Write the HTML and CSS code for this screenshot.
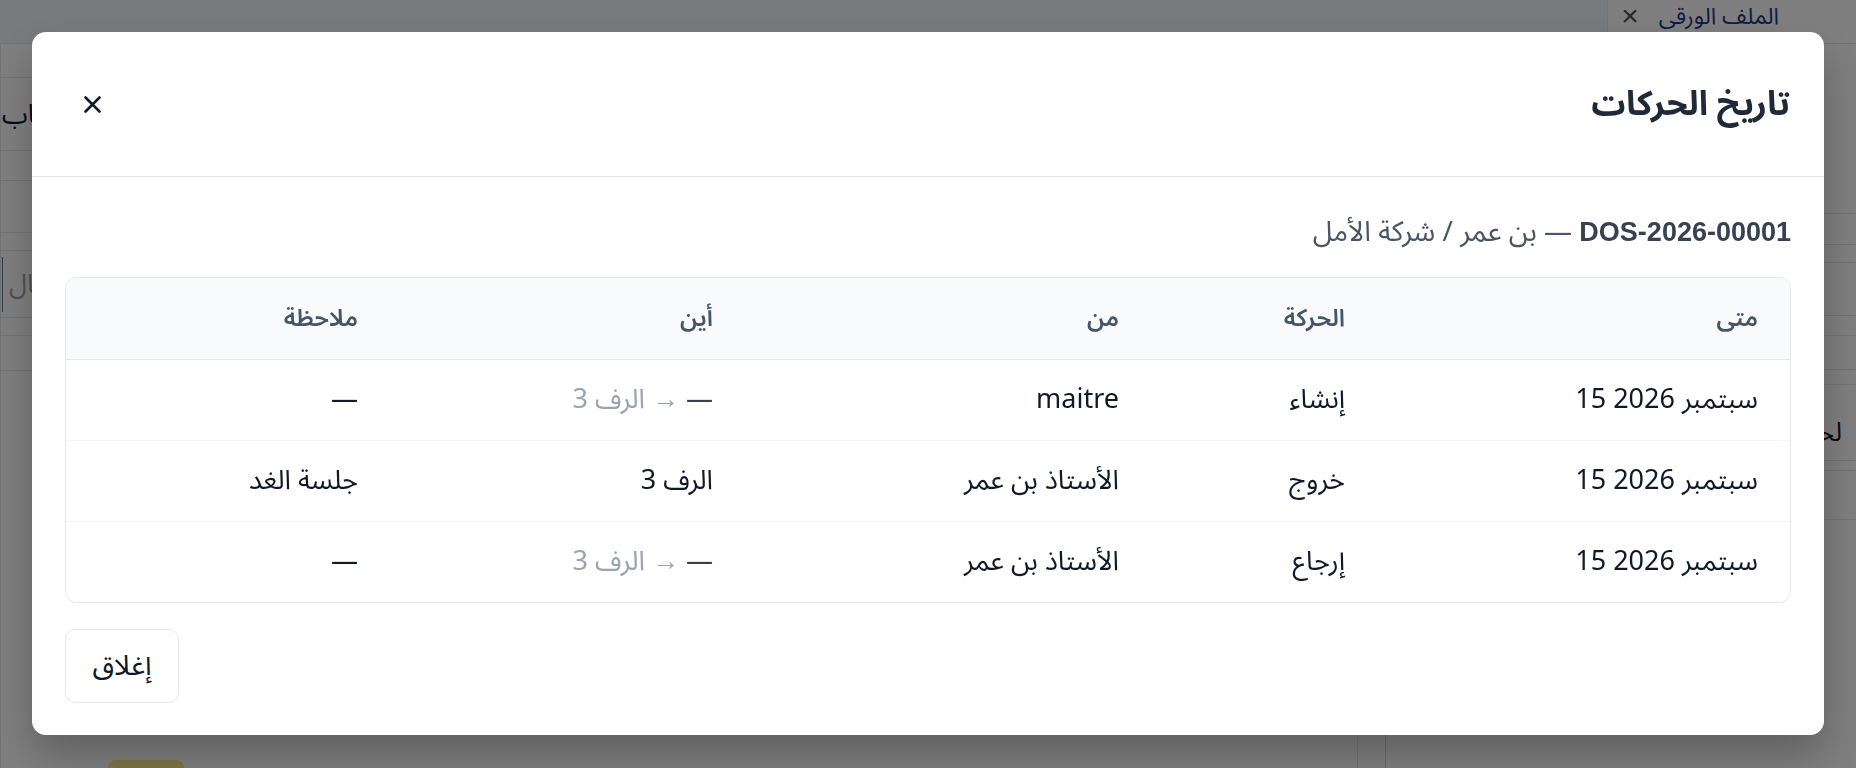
FILE: index.html
```html
<!DOCTYPE html>
<html lang="ar" dir="rtl">
<head>
<meta charset="utf-8">
<title>تاريخ الحركات</title>
<link rel="stylesheet" href="styles.css">
</head>
<body>
<div class="page">
  <div class="topbar">
    <div class="tab"><span class="tab-label">الملف الورقى</span><span class="tab-x">×</span></div>
  </div>
  <div class="page-body">
    <aside class="side">
      <div class="side-row h170"></div>
      <div class="side-row h31"></div>
      <div class="side-row h18"></div>
      <div class="side-row h53"></div>
      <div class="side-row h20"></div>
      <div class="side-row h34"></div>
      <div class="side-row h15"></div>
      <div class="side-row h76 txt"><span>لحالة</span></div>
      <div class="side-row h10"></div>
      <div class="side-row h49"></div>
      <div class="side-row grow"></div>
    </aside>
    <main class="main">
      <div class="main-row h34"></div>
      <div class="main-row h73 txt"><span>الحساب</span></div>
      <div class="main-row h30"></div>
      <div class="main-row h52"></div>
      <div class="main-row h18"></div>
      <div class="main-row h67 input"><span>إدخال</span></div>
      <div class="main-row h18"></div>
      <div class="main-row h35"></div>
      <div class="main-row last"><span class="badge"></span></div>
    </main>
  </div>
</div>

<div class="backdrop">
  <div class="modal" role="dialog" aria-labelledby="mtitle">
    <header class="modal-head">
      <h2 id="mtitle" class="modal-title">تاريخ الحركات</h2>
      <button class="close-btn" aria-label="إغلاق">
        <svg viewBox="0 0 24 24" width="21" height="21" fill="none" stroke="currentColor" stroke-width="3" stroke-linecap="round"><path d="M4 4L20 20M20 4L4 20"/></svg>
      </button>
    </header>
    <div class="modal-body">
      <p class="sub"><strong class="ref">DOS-2026-00001</strong> — بن عمر / شركة الأمل</p>
      <div class="table-wrap">
        <table class="moves">
          <thead>
            <tr>
              <th class="c-when">متى</th>
              <th class="c-move">الحركة</th>
              <th class="c-who">من</th>
              <th class="c-where">أين</th>
              <th class="c-note">ملاحظة</th>
            </tr>
          </thead>
          <tbody>
            <tr>
              <td>سبتمبر 2026 15</td>
              <td>إنشاء</td>
              <td>maitre</td>
              <td><span class="dash">—</span> <span class="muted">→ الرف 3</span></td>
              <td class="dash">—</td>
            </tr>
            <tr>
              <td>سبتمبر 2026 15</td>
              <td>خروج</td>
              <td>الأستاذ بن عمر</td>
              <td>الرف 3</td>
              <td>جلسة الغد</td>
            </tr>
            <tr>
              <td>سبتمبر 2026 15</td>
              <td>إرجاع</td>
              <td>الأستاذ بن عمر</td>
              <td><span class="dash">—</span> <span class="muted">→ الرف 3</span></td>
              <td class="dash">—</td>
            </tr>
          </tbody>
        </table>
      </div>
      <div class="foot">
        <button class="btn">إغلاق</button>
      </div>
    </div>
  </div>
</div>
</body>
</html>
```

FILE: styles.css
```css
* { box-sizing: border-box; }

html, body {
  margin: 0;
  padding: 0;
  height: 100%;
}

body {
  font-family: "Noto Sans Arabic", "Liberation Sans", "DejaVu Sans", sans-serif;
  background: #f3f4f6;
  color: #111827;
  overflow: hidden;
}

/* ---------- page behind the dialog ---------- */
.page {
  height: 768px;
  display: flex;
  flex-direction: column;
}

.topbar {
  height: 44px;
  display: flex;
  border-bottom: 1px solid #e5e7eb;
  background: #f3f4f6;
}

.tab {
  width: 249px;
  background: #ffffff;
  border-left: 1px solid #e5e7eb;
  display: flex;
  align-items: flex-start;
  gap: 20px;
  padding-right: 77px;
  padding-top: 2px;
  font-size: 23px;
  line-height: 30px;
  white-space: nowrap;
}

.tab-label { color: #1e3a8a; }
.tab-x { color: #4b5563; font-family: "Liberation Sans", sans-serif; font-size: 30px; line-height: 28px; }

.page-body {
  flex: 1;
  display: flex;
}

.side {
  width: 471px;
  border-left: 1px solid #d1d5db;
  background: #ffffff;
  display: flex;
  flex-direction: column;
}

.side-row {
  border-bottom: 1px solid #e5e7eb;
  display: flex;
  align-items: center;
  padding-right: 14px;
  font-size: 26px;
}
.side-row.txt { align-items: flex-end; }
.side-row.grow { flex: 1; border-bottom: none; }

.main {
  flex: 1;
  display: flex;
  flex-direction: column;
  background: #ffffff;
  border-left: 1px solid #e5e7eb;
}

.main-row {
  border-bottom: 1px solid #e5e7eb;
  display: flex;
  align-items: center;
  justify-content: flex-end;
  padding-left: 1px;
  font-size: 26px;
}
.main-row.input span { color: #9ca3af; border-left: 1px solid #6b7280; padding-left: 6px; }
.main-row.last {
  flex: 1;
  border-bottom: none;
  border-right: 1px solid #e5e7eb;
  margin-right: 27px;
  align-items: flex-end;
  padding-left: 107px;
}

.badge {
  display: block;
  width: 76px;
  height: 8px;
  background: #fde68a;
  border-radius: 8px 8px 0 0;
}

.h10 { height: 10px; }
.h15 { height: 15px; } .h18 { height: 18px; } .h20 { height: 20px; }
.h30 { height: 30px; } .h31 { height: 31px; } .h34 { height: 34px; }
.h35 { height: 35px; } .h49 { height: 49px; } .h52 { height: 52px; }
.h53 { height: 53px; } .h67 { height: 67px; }
.h73 { height: 73px; } .h76 { height: 76px; } .h170 { height: 170px; }

/* ---------- dialog ---------- */
.backdrop {
  position: fixed;
  inset: 0;
  background: rgba(0, 0, 0, 0.5);
  padding: 32px;
}

.modal {
  background: #ffffff;
  border-radius: 14px;
  box-shadow: 0 20px 40px rgba(0, 0, 0, 0.25);
  display: flex;
  flex-direction: column;
}

.modal-head {
  height: 145px;
  border-bottom: 1px solid #e5e7eb;
  display: flex;
  align-items: center;
  justify-content: space-between;
  padding: 0 34px 0 50px;
}

.modal-title {
  margin: 0;
  font-size: 34px;
  line-height: 44px;
  font-weight: 700;
  color: #1f2937;
}

.close-btn {
  border: none;
  background: none;
  padding: 0;
  color: #111827;
  display: flex;
  cursor: pointer;
}

.modal-body {
  padding: 40px 33px 32px;
}

.sub {
  margin: 0 0 29px;
  font-size: 28px;
  line-height: 30px;
  color: #4b5563;
}

.ref {
  font-family: "Liberation Sans", sans-serif;
  font-size: 27px;
  font-weight: 700;
  color: #374151;
}

.table-wrap {
  border: 1px solid #e5e7eb;
  border-radius: 12px;
  overflow: hidden;
}

.moves {
  width: 100%;
  border-collapse: collapse;
  table-layout: fixed;
}

.moves th, .moves td {
  text-align: right;
  padding: 0 32px;
  height: 81px;
}

.moves th {
  background: #f8fafc;
  color: #475569;
  font-weight: 600;
  font-size: 24px;
  border-bottom: 1px solid #e5e7eb;
}

.moves td {
  font-size: 27px;
  color: #111827;
  border-bottom: 1px solid #f1f5f9;
}

.moves tbody tr:last-child td { border-bottom: none; }

.c-when { width: 413px; }
.c-move { width: 226px; }
.c-who { width: 406px; }
.c-where { width: 355px; }

.dash { color: #374151; }
.muted { color: #9ca3af; }

.foot {
  margin-top: 26px;
  display: flex;
  justify-content: flex-end;
}

.btn {
  width: 114px;
  height: 74px;
  border: 1px solid #e5e7eb;
  border-radius: 10px;
  background: #ffffff;
  font-family: inherit;
  font-size: 28px;
  color: #111827;
}
```
